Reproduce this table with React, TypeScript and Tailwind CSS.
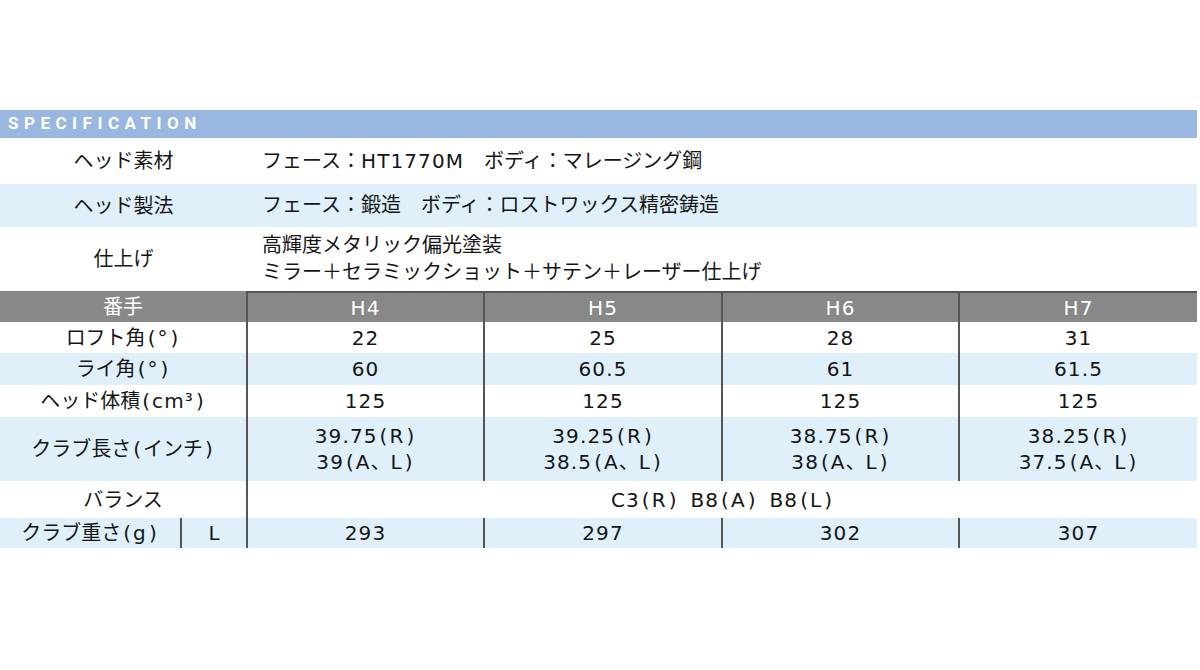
import React from 'react'

const font = { fontFamily: '"DejaVu Sans", "Noto Sans CJK JP", sans-serif' }

// latin runs are set a touch wider, parens sit a little apart from the text around them
const fmt = (s: string) => (
  <span key={s}>
    {s.split(/([()]|[A-Za-z0-9.°³ ]+)/).map((part, i) => {
      if (!part) return null
      if (part === '(' || part === ')')
        return (
          <span key={i} className="mx-[2px]">
            {part}
          </span>
        )
      if (/^[A-Za-z0-9.°³ ]+$/.test(part))
        return (
          <span key={i} className="tracking-[1.1px]">
            {part}
          </span>
        )
      return <React.Fragment key={i}>{part}</React.Fragment>
    })}
  </span>
)

const clubs = [
  { no: 'H4', loft: '22', lie: '60', vol: '125', len: ['39.75(R)', '39(A、L)'], weight: '293' },
  { no: 'H5', loft: '25', lie: '60.5', vol: '125', len: ['39.25(R)', '38.5(A、L)'], weight: '297' },
  { no: 'H6', loft: '28', lie: '61', vol: '125', len: ['38.75(R)', '38(A、L)'], weight: '302' },
  { no: 'H7', loft: '31', lie: '61.5', vol: '125', len: ['38.25(R)', '37.5(A、L)'], weight: '307' },
]

const cols = 'grid grid-cols-[246px_237px_238px_237px_1fr]'
const line = 'border-l-2 border-[#555]'

const SpecRow = ({ label, bg, h, children }: { label: string; bg: string; h: string; children: React.ReactNode }) => (
  <div className={`flex ${bg} ${h}`}>
    <div className="w-[247px] shrink-0 flex items-center justify-center">{label}</div>
    <div className="flex-1 flex flex-col justify-center pl-[15px] leading-[27px]">{children}</div>
  </div>
)

const TableRow = ({
  label,
  bg,
  h,
  values,
}: {
  label: React.ReactNode
  bg: string
  h: string
  values: React.ReactNode[]
}) => (
  <div className={`${cols} ${bg} ${h}`}>
    <div className="flex items-center justify-center">{label}</div>
    {values.map((v, i) => (
      <div key={i} className={`${line} flex flex-col items-center justify-center leading-[26px]`}>
        {v}
      </div>
    ))}
  </div>
)

export default function App() {
  return (
    <div className="w-[1200px] h-[670px] bg-white text-[#151515] text-[20px] pt-[110px]" style={font}>
      <div className="w-[1197px]">
        <div className="h-[28px] bg-[#99b7e1] flex items-center pl-[8px]">
          <span
            className="text-white font-bold text-[17px] tracking-[5.5px]"
            style={{ fontFamily: 'Roboto, "Noto Sans", sans-serif' }}
          >
            SPECIFICATION
          </span>
        </div>

        <SpecRow label="ヘッド素材" bg="bg-white" h="h-[46px]">
          {fmt('フェース：HT1770M　ボディ：マレージング鋼')}
        </SpecRow>
        <SpecRow label="ヘッド製法" bg="bg-[#dff0fa]" h="h-[43px]">
          <span>フェース：鍛造　ボディ：ロストワックス精密鋳造</span>
        </SpecRow>
        <SpecRow label="仕上げ" bg="bg-white" h="h-[64px]">
          <span>高輝度メタリック偏光塗装</span>
          <span>ミラー＋セラミックショット＋サテン＋レーザー仕上げ</span>
        </SpecRow>

        {/* club table */}
        <div className={`${cols} bg-[#888888] h-[31px] text-white`}>
          <div className="flex items-center justify-center">番手</div>
          {clubs.map((c) => (
            <div key={c.no} className={`${line} border-t-2 flex items-center justify-center`}>
              {fmt(c.no)}
            </div>
          ))}
        </div>
        <TableRow label={fmt('ロフト角(°)')} bg="bg-white" h="h-[31px]" values={clubs.map((c) => fmt(c.loft))} />
        <TableRow label={fmt('ライ角(°)')} bg="bg-[#dff0fa]" h="h-[32px]" values={clubs.map((c) => fmt(c.lie))} />
        <TableRow label={fmt('ヘッド体積(cm³)')} bg="bg-white" h="h-[32px]" values={clubs.map((c) => fmt(c.vol))} />
        <TableRow
          label={fmt('クラブ長さ(インチ)')}
          bg="bg-[#dff0fa]"
          h="h-[64px]"
          values={clubs.map((c) => (
            <>
              {fmt(c.len[0])}
              {fmt(c.len[1])}
            </>
          ))}
        />
        <div className="grid grid-cols-[246px_1fr] bg-white h-[37px]">
          <div className="flex items-center justify-center">バランス</div>
          <div className={`${line} flex items-center justify-center gap-[12px]`}>
            {['C3(R)', 'B8(A)', 'B8(L)'].map(fmt)}
          </div>
        </div>
        <TableRow
          label={
            <div className="flex w-full h-full">
              <div className="w-[180px] flex items-center justify-center">{fmt('クラブ重さ(g)')}</div>
              <div className={`flex-1 ${line} flex items-center justify-center`}>L</div>
            </div>
          }
          bg="bg-[#dff0fa]"
          h="h-[30px]"
          values={clubs.map((c) => fmt(c.weight))}
        />
      </div>
    </div>
  )
}
